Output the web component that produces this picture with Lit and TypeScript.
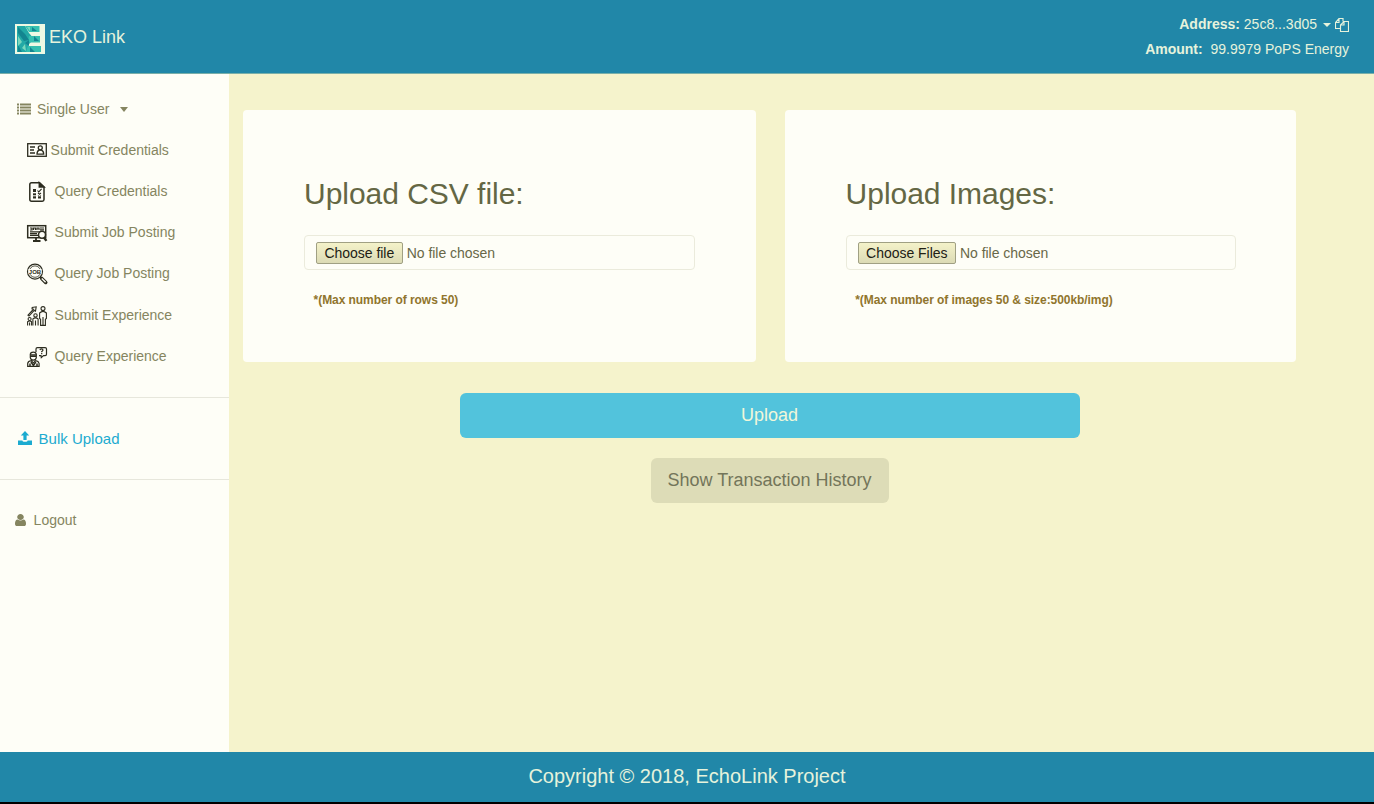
import { LitElement, html, svg, css } from "lit";
import { customElement, property } from "lit/decorators.js";

const icons: Record<string, unknown> = {
  credentials: svg`<g fill="none" stroke="currentColor" stroke-width="1.3"><rect x=".7" y="3.7" width="18.6" height="12.6"/><path d="M3 7h5M3 10h4M3 13h5"/><circle cx="13.3" cy="7.8" r="2"/><path d="M10 14.2c0-2.2 1-3.6 2.2-4h2.2c1.2.4 2.3 1.8 2.3 4z"/></g>`,
  checklist: svg`<g fill="none" stroke="currentColor" stroke-width="1.5"><path d="M4.5 .8h8L17 5v12.5q0 1.7-1.7 1.7H4.5q-1.7 0-1.7-1.7V2.5Q2.8.8 4.5.8z"/><path d="M12.3.8V5H17z" fill="currentColor"/></g><g fill="currentColor"><rect x="6" y="7" width="3" height="3"/><rect x="6" y="11.3" width="3" height="2"/><rect x="6" y="14.3" width="3" height="2.2"/><rect x="11" y="14.3" width="3" height="2.2"/></g><path d="M10.5 8.5l1.3 1.4 2.8-3M11 11l3 2.4M14 11l-3 2.4" fill="none" stroke="currentColor" stroke-width="1.1"/>`,
  monitor: svg`<g fill="none" stroke="currentColor"><rect x=".7" y="2.7" width="18" height="12" stroke-width="1.5"/><path d="M3 5h2v2H3M6.5 7V5h2v2M10 7V5h2v2M13 5h4M13 6.8h4M3 8.8h10M3 10.6h7M3 12.4h8" stroke-width="1.2"/><path d="M9 15v2.6M6 18h7.5" stroke-width="1.8"/><circle cx="15" cy="11.7" r="3.5" fill="#fefef7" stroke-width="1.5"/><path d="M17 14.5l2.4 3.4" stroke-width="2.4"/></g>`,
  job: svg`<g fill="none" stroke="currentColor"><circle cx="8" cy="7.6" r="7.5" stroke-width="1.2"/><circle cx="8" cy="7.6" r="5.7" stroke-width=".8"/><path d="M13.1 12.9l1.3 1.3" stroke-width="1.4"/><path d="M14.7 14.4l4 4" stroke-width="3.6" stroke-linecap="round"/><path d="M14.8 14.5l3.8 3.8" stroke="#fefef7" stroke-width="1.3"/></g><rect x="1.5" y="5" width="13" height="5.2" fill="#fefef7"/><text class="job" x="8" y="9.8" text-anchor="middle" fill="currentColor">JOB</text>`,
  growth: svg`<g fill="none" stroke="currentColor" stroke-width="1.1"><path d="M1 9.2L6.5 3.2 5 2.8 5.2 1.4 9.2.8l-.7 4.4-1.3-.7L2 10.1z"/><circle cx="2.6" cy="13" r="1.5"/><path d="M.6 19.4v-3.7q2-1.5 4 0v3.7M2.6 16.5v3"/><circle cx="8.5" cy="9.4" r="1.7"/><path d="M5.9 19.4v-6.5q2.6-2 5.2 0v6.5M8.5 14.5v5"/><circle cx="16" cy="2.6" r="2"/><path d="M12.6 12.5V7q3.4-3.4 6.8 0v5.5l-1 .8v6.1h-4.8v-6.1zM16 11v8"/></g>`,
  question: svg`<g fill="none" stroke="currentColor" stroke-width="1.2"><path d="M9 5V2q0-1.4 1.4-1.4h7.7q1.4 0 1.4 1.4v5.2q0 1.4-1.4 1.4h-1.6L14.3 10.6l-.3-2H12"/><path d="M12.9 3q.3-1.1 1.6-1.1T16 3.1q0 .8-1.3 1.5v.6M14.7 6v1.2"/><path d="M3.3 9.3V7.2q.4-2 3-2t3 2v2.1H3.3v1.4q.4 2.3 3 2.5 2.6-.2 3-2.5V9M.7 19.3v-3q.4-2 3.5-2.6l2.2 2.2 2.2-2.2q3 .6 3.5 2.6v3z"/><path d="M3.6 7.9h5.6M4 15l2.4 3.5L8.8 15M3 19v-2.5M10 19v-2.5" stroke-width="1.5"/></g>`,
};

@customElement("nav-item")
class NavItem extends LitElement {
  @property() label = "";
  @property() icon = "";
  static styles = css`
    :host { display: flex; align-items: center; height: 41.25px; padding-left: 27px; color: #858560; font-size: 14px; }
    svg { width: 20px; height: 20px; flex: none; color: #2d2d20; margin: 2px 7.6px 0 0; overflow: visible; }
    :host([tight]) svg { margin: 1px 3.6px 0 0; }
    .job { font: bold 6px "Liberation Sans", Arial, sans-serif; }
  `;
  render() {
    return html`<svg viewBox="0 0 20 20">${icons[this.icon]}</svg><span>${this.label}</span>`;
  }
}

@customElement("upload-card")
class UploadCard extends LitElement {
  @property() heading = "";
  @property() button = "";
  @property() note = "";
  static styles = css`
    :host { display: block; box-sizing: border-box; height: 252px; padding: 67px 60.6px 0 61px; background: #fefef7; border-radius: 4px; }
    h2 { margin: 0 0 25px; font-size: 30px; font-weight: 400; line-height: 33px; letter-spacing: -0.03px; color: #646744; }
    .control { display: flex; align-items: center; box-sizing: border-box; height: 35px; padding-left: 11px; border: 1px solid #ebebdc; border-radius: 4px; font-size: 14px; letter-spacing: -0.03px; color: #686848; }
    button { height: 22px; padding: 0 7.5px; margin: 1px 4px 0 0; border: 1px solid #a0a083; border-radius: 2px; background: linear-gradient(#f4f2c9, #dcdbb5); color: #202014; font: 14px "Liberation Sans", Arial, sans-serif; letter-spacing: -0.03px; white-space: nowrap; }
    p { margin: 22px 0 0 9.6px; font-size: 12px; line-height: 16px; font-weight: 700; letter-spacing: -0.06px; color: #90752d; }
  `;
  render() {
    return html`<h2>${this.heading}</h2>
      <div class="control"><button>${this.button}</button><span>No file chosen</span></div>
      <p>${this.note}</p>`;
  }
}

@customElement("app-root")
class AppRoot extends LitElement {
  static styles = css`
    :host { display: flex; flex-direction: column; box-sizing: border-box; height: 804px; border-bottom: 2px solid #000; font-family: "Liberation Sans", Arial, sans-serif; overflow: hidden; }
    header { display: flex; justify-content: space-between; flex: none; box-sizing: border-box; height: 74px; padding: 0 25px 0 15px; background: #2187a8; border-bottom: 1px solid #79afa9; color: #e6f3dc; }
    .brand { display: flex; align-items: center; gap: 4px; height: 78px; font-size: 18px; line-height: 20px; }
    .brand svg { width: 30px; height: 30px; }
    .brand span { margin-top: -4px; }
    .account { padding-top: 12px; font-size: 14px; line-height: 25px; text-align: right; }
    .line { display: flex; align-items: center; justify-content: flex-end; white-space: pre; }
    .copy { width: 14px; height: 14px; margin-left: 4px; }
    .caret { border: 4px solid transparent; border-top-color: currentColor; border-bottom: 0; }
    .account .caret { margin-left: 6px; }
    .body { display: flex; flex: 1; min-height: 0; background: #f5f3cc; }
    aside { width: 229px; flex: none; box-sizing: border-box; padding-top: 15px; background: #fefef7; color: #858560; font-size: 14px; }
    .row { display: flex; align-items: center; }
    .top { height: 40px; padding-left: 17px; }
    .top svg { width: 14px; height: 12px; margin-right: 6px; }
    .top .caret { margin-left: 11px; border-width: 5px 4.5px 0; }
    .bulk { height: 81px; margin-top: 20.5px; padding-left: 18px; border: solid #e7e7dc; border-width: 1px 0; color: #1cabd0; font-size: 15px; }
    .bulk svg { width: 14px; height: 14px; margin: -2px 6.6px 0 0; }
    .logout { height: 80px; padding-left: 15px; }
    .logout svg { width: 11px; height: 12px; margin-right: 7.6px; }
    main { flex: 1; padding: 36px 78px 0 14px; border-right: 1px solid #e4e3bd; }
    .cards { display: grid; grid-template-columns: 513px 511.5px; gap: 28.6px; }
    .actions { display: flex; flex-direction: column; align-items: center; gap: 20px; margin-top: 31px; }
    .btn { height: 45px; padding: 0 16px; border: 0; border-radius: 6px; font: 18px "Liberation Sans", Arial, sans-serif; }
    .primary { width: 620px; background: #52c3dc; color: #f0f7da; }
    .muted { width: 238px; background: #dddcb7; color: #73755a; white-space: nowrap; padding: 0; }
    footer { display: flex; align-items: center; justify-content: center; flex: none; height: 50px; background: #2187a8; color: #e6f3dc; font-size: 20px; }
    footer span { margin-top: -2px; }
  `;

  render() {
    return html`
      <header>
        <div class="brand">
          <svg viewBox="0 0 30 30"><rect width="30" height="30" fill="#eef9e4"/><path d="M2 2h8l4 7 5 6-5 5-2 8H2z" fill="#22a9a6"/><path d="M10 2h14.5v6H14zM14 12h11v6.5H13zM13 22h13v6H11z" fill="#35bfb0"/><path d="M3 3l7 7 4 6-5 1-6-8zM3 21l4 7H3zM10 19l4-3v6zM15 23l5 5h-5zM19 12l5 5h-5zM17 3l5 4h-5z" fill="#138590"/><path d="M3 12l4 6-4 4zM7 24l3-4 1 7zM12 3l3 4V3z" fill="#7ad8bd"/></svg>
          <span>EKO Link</span>
        </div>
        <div class="account">
          <div class="line"><b>Address:</b> 25c8...3d05<i class="caret"></i><svg class="copy" viewBox="0 0 14 14" fill="none" stroke="currentColor" stroke-width="1.15"><path d="M5.5 10.5h-5v-6l3.5-4h4v3M4 .5v4H.5M9 3.5h4.5v10h-8v-6.5zM9 3.5V7H5.5"/></svg></div>
          <div class="line"><b>Amount:</b>  99.9979 PoPS Energy</div>
        </div>
      </header>
      <div class="body">
        <aside>
          <div class="row top">
            <svg viewBox="0 0 14 12" fill="currentColor"><path d="M0 .5h2v2H0zM3 .5h11v2H3zM0 3.5h2v2H0zM3 3.5h11v2H3zM0 6.5h2v2H0zM3 6.5h11v2H3zM0 9.5h2v2H0zM3 9.5h11v2H3z"/></svg>
            <span>Single User</span><i class="caret"></i>
          </div>
          <nav-item tight icon="credentials" label="Submit Credentials"></nav-item>
          <nav-item icon="checklist" label="Query Credentials"></nav-item>
          <nav-item icon="monitor" label="Submit Job Posting"></nav-item>
          <nav-item icon="job" label="Query Job Posting"></nav-item>
          <nav-item icon="growth" label="Submit Experience"></nav-item>
          <nav-item icon="question" label="Query Experience"></nav-item>
          <div class="row bulk">
            <svg viewBox="0 0 14 14" fill="currentColor"><path d="M7 0l4.2 4.5H8.6V9H5.4V4.5H2.8z"/><path d="M0 9.5h4.3q.5 1.2 1.5 1.2h2.4q1 0 1.5-1.2H14V14H0z"/></svg>
            <span>Bulk Upload</span>
          </div>
          <div class="row logout">
            <svg viewBox="0 0 1280 1536" preserveAspectRatio="none" fill="currentColor"><path d="M1280 1271q0 109-62.5 187t-150.5 78h-854q-88 0-150.5-78t-62.5-187q0-85 8.5-160.5t31.5-152 58.5-131 94-89 134.5-34.5q131 128 313 128t313-128q76 0 134.5 34.5t94 89 58.5 131 31.5 152 8.5 160.5zm-256-887q0 159-112.5 271.5t-271.5 112.5-271.5-112.5-112.5-271.5 112.5-271.5 271.5-112.5 271.5 112.5 112.5 271.5z"/></svg>
            <span>Logout</span>
          </div>
        </aside>
        <main>
          <div class="cards">
            <upload-card heading="Upload CSV file:" button="Choose file" note="*(Max number of rows 50)"></upload-card>
            <upload-card heading="Upload Images:" button="Choose Files" note="*(Max number of images 50 &amp; size:500kb/img)"></upload-card>
          </div>
          <div class="actions">
            <button class="btn primary">Upload</button>
            <button class="btn muted">Show Transaction History</button>
          </div>
        </main>
      </div>
      <footer><span>Copyright © 2018, EchoLink Project</span></footer>
    `;
  }
}
